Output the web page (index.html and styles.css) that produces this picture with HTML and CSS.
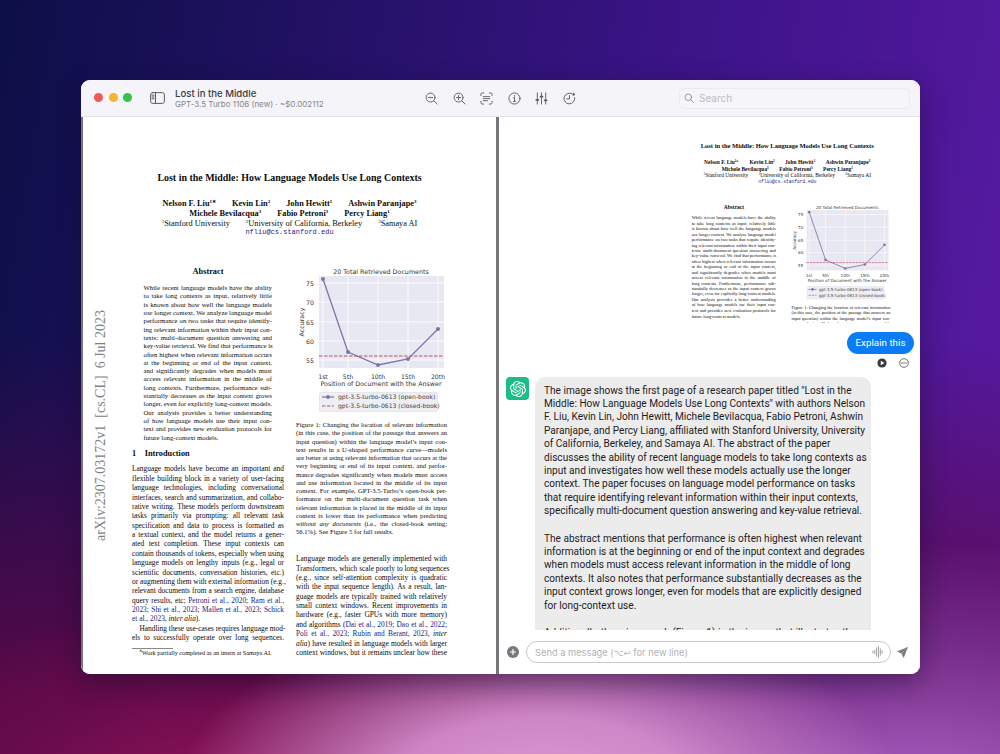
FILE: index.html
```html
<!DOCTYPE html>
<html lang="en">
<head>
<meta charset="utf-8">
<title>Lost in the Middle</title>
<link rel="stylesheet" href="styles.css">
</head>
<body>
<svg class="defs" width="0" height="0" aria-hidden="true">
  <defs>
    <g id="chart">
      <rect x="23" y="11" width="125" height="92" fill="#e8e8f2"/>
      <g stroke="#fff" stroke-width=".8">
        <path d="M23 18H148M23 37H148M23 57H148M23 76H148M23 95H148"/>
        <path d="M27 11V103M52 11V103M82 11V103M112 11V103M142 11V103"/>
      </g>
      <path d="M27 14L52 87L82 100L112 94L142 64" fill="none" stroke="#8073ab" stroke-width="1.3"/>
      <g fill="#8073ab">
        <circle cx="27" cy="14" r="2"/><circle cx="52" cy="87" r="2"/><circle cx="82" cy="100" r="2"/><circle cx="112" cy="94" r="2"/><circle cx="142" cy="64" r="2"/>
      </g>
      <path d="M23 91H148" stroke="#c2506a" stroke-width="1" stroke-dasharray="3.5 1.5"/>
      <g class="ct">
        <text class="ct-title" x="85" y="8.5" text-anchor="middle">20 Total Retrieved Documents</text>
        <text class="ct-tick" x="10" y="20.5">75</text>
        <text class="ct-tick" x="10" y="39.5">70</text>
        <text class="ct-tick" x="10" y="59.5">65</text>
        <text class="ct-tick" x="10" y="78.5">60</text>
        <text class="ct-tick" x="10" y="97.5">55</text>
        <text class="ct-tick" x="27" y="113.5" text-anchor="middle">1st</text>
        <text class="ct-tick" x="52" y="113.5" text-anchor="middle">5th</text>
        <text class="ct-tick" x="82" y="113.5" text-anchor="middle">10th</text>
        <text class="ct-tick" x="112" y="113.5" text-anchor="middle">15th</text>
        <text class="ct-tick" x="142" y="113.5" text-anchor="middle">20th</text>
        <text class="ct-title" x="85" y="120.5" text-anchor="middle">Position of Document with the Answer</text>
        <text class="ct-title" transform="translate(7.5 57) rotate(-90)" text-anchor="middle">Accuracy</text>
      </g>
      <rect x="23.5" y="127.5" width="118" height="19" rx="1.5" fill="#eeeef5" stroke="#dcdce6" stroke-width=".6"/>
      <path d="M26 132H38" stroke="#8073ab" stroke-width="1.2"/>
      <circle cx="32" cy="132" r="2" fill="#8073ab"/>
      <path d="M26 141H38" stroke="#c2506a" stroke-width="1" stroke-dasharray="3.5 1.5"/>
      <text class="ct-leg" x="42" y="134">gpt-3.5-turbo-0613 (open-book)</text>
      <text class="ct-leg" x="42" y="143">gpt-3.5-turbo-0613 (closed-book)</text>
    </g>
  </defs>
</svg>

<main class="window">
  <header class="titlebar">
    <div class="lights"><i class="light red"></i><i class="light yellow"></i><i class="light green"></i></div>
    <svg class="ico sidebar-ico" viewBox="0 0 15 12"><rect x=".6" y=".6" width="13.8" height="10.8" rx="2.2"/><path d="M5.5.6V11.4M2 3.2H4M2 5H4M2 6.8H4"/></svg>
    <div class="doc">
      <div class="doc-title">Lost in the Middle</div>
      <div class="doc-sub">GPT-3.5 Turbo 1106 (new) · ~$0.002112</div>
    </div>
    <div class="tools">
      <svg class="ico" viewBox="0 0 14 14"><circle cx="6" cy="6" r="4.8"/><path d="M9.5 9.5L13 13M3.8 6H8.2"/></svg>
      <svg class="ico" viewBox="0 0 14 14"><circle cx="6" cy="6" r="4.8"/><path d="M9.5 9.5L13 13M3.8 6H8.2M6 3.8V8.2"/></svg>
      <svg class="ico" viewBox="0 0 14 14"><path d="M1 4V2.500Q1 1 2.500 1H4M10 1H11.500Q13 1 13 2.500V4M13 10V11.500Q13 13 11.500 13H10M4 13H2.500Q1 13 1 11.500V10M3.500 5H10.500M3.500 7.200H10.500M3.500 9.400H8"/></svg>
      <svg class="ico" viewBox="0 0 14 14"><circle cx="7" cy="7" r="6"/><path d="M7 6.300V10.200M6 6.300H7M6 10.200H8M7 3.700V4.500"/></svg>
      <svg class="ico" viewBox="0 0 14 14"><path d="M2.500 1V13M7 1V13M11.500 1V13"/><path class="knob" d="M1.500 8.500H3.500M6 5H8M10.500 9H12.500"/></svg>
      <svg class="ico" viewBox="0 0 14 14"><path d="M9.500 1.800A5.800 5.800 0 1 0 12.600 6M7 3.800V7.500H3.800"/><circle class="badge" cx="11.500" cy="2.500" r="1.700"/></svg>
    </div>
    <div class="search">
      <svg class="ico search-ico" viewBox="0 0 14 14"><circle cx="6" cy="6" r="4.600"/><path d="M9.500 9.500L13 13"/></svg>
      <span>Search</span>
    </div>
  </header>

  <div class="panes">
    <section class="pdf-pane">
      <div class="stamp">arXiv:2307.03172v1 &nbsp;[cs.CL] &nbsp;6 Jul 2023</div>
      <article class="paper">
        <h1 class="p-title">Lost in the Middle: How Language Models Use Long Contexts</h1>
        <div class="p-authors">
          <div class="row"><b>Nelson F. Liu<sup>1∗</sup></b><b>Kevin Lin<sup>2</sup></b><b>John Hewitt<sup>1</sup></b><b>Ashwin Paranjape<sup>3</sup></b></div>
          <div class="row"><b>Michele Bevilacqua<sup>3</sup></b><b>Fabio Petroni<sup>3</sup></b><b>Percy Liang<sup>1</sup></b></div>
          <div class="row wide"><span><sup>1</sup>Stanford University</span><span><sup>2</sup>University of California, Berkeley</span><span><sup>3</sup>Samaya AI</span></div>
          <div class="mail">nfliu@cs.stanford.edu</div>
        </div>
        <div class="cols">
          <div class="col">
            <h2 class="abs-h">Abstract</h2>
            <div class="lines abs">
              <span>While recent language models have the ability</span>
              <span>to take long contexts as input, relatively little</span>
              <span>is known about how well the language models</span>
              <span><em>use</em> longer context. We analyze language model</span>
              <span>performance on two tasks that require identify-</span>
              <span>ing relevant information within their input con-</span>
              <span>texts: multi-document question answering and</span>
              <span>key-value retrieval. We find that performance is</span>
              <span>often highest when relevant information occurs</span>
              <span>at the beginning or end of the input context,</span>
              <span>and significantly degrades when models must</span>
              <span>access relevant information in the middle of</span>
              <span>long contexts. Furthermore, performance sub-</span>
              <span>stantially decreases as the input context grows</span>
              <span>longer, even for explicitly long-context models.</span>
              <span>Our analysis provides a better understanding</span>
              <span>of how language models use their input con-</span>
              <span>text and provides new evaluation protocols for</span>
              <span class="end">future long-context models.</span>
            </div>
            <h2 class="sec-h"><span>1</span><span>Introduction</span></h2>
            <div class="lines body">
              <span>Language models have become an important and</span>
              <span>flexible building block in a variety of user-facing</span>
              <span>language technologies, including conversational</span>
              <span>interfaces, search and summarization, and collabo-</span>
              <span>rative writing. These models perform downstream</span>
              <span>tasks primarily via prompting: all relevant task</span>
              <span>specification and data to process is formatted as</span>
              <span>a textual context, and the model returns a gener-</span>
              <span>ated text completion. These input contexts can</span>
              <span>contain thousands of tokens, especially when using</span>
              <span>language models on lengthy inputs (e.g., legal or</span>
              <span>scientific documents, conversation histories, etc.)</span>
              <span>or augmenting them with external information (e.g.,</span>
              <span>relevant documents from a search engine, database</span>
              <span>query results, etc; <a>Petroni et al., 2020</a>; <a>Ram et al.,</a></span>
              <span><a>2023</a>; <a>Shi et al., 2023</a>; <a>Mallen et al., 2023</a>; <a>Schick</a></span>
              <span class="end"><a>et al., 2023</a>, <em>inter alia</em>).</span>
              <span class="indent">Handling these use-cases requires language mod-</span>
              <span>els to successfully operate over long sequences.</span>
            </div>
            <div class="foot"><sup>∗</sup>Work partially completed as an intern at Samaya AI.</div>
          </div>
          <div class="col">
            <svg class="chart" viewBox="0 0 155 150"><use href="#chart"/></svg>
            <div class="lines cap">
              <span>Figure 1: Changing the location of relevant information</span>
              <span>(in this case, the position of the passage that answers an</span>
              <span>input question) within the language model’s input con-</span>
              <span>text results in a U-shaped performance curve—models</span>
              <span>are better at using relevant information that occurs at the</span>
              <span>very beginning or end of its input context, and perfor-</span>
              <span>mance degrades significantly when models must access</span>
              <span>and use information located in the middle of its input</span>
              <span>context. For example, GPT-3.5-Turbo’s open-book per-</span>
              <span>formance on the multi-document question task when</span>
              <span>relevant information is placed in the middle of its input</span>
              <span>context is lower than its performance when predicting</span>
              <span><em>without any documents</em> (i.e., the closed-book setting;</span>
              <span class="end">56.1%). See Figure <a>5</a> for full results.</span>
            </div>
            <div class="lines body body-2">
              <span>Language models are generally implemented with</span>
              <span>Transformers, which scale poorly to long sequences</span>
              <span>(e.g., since self-attention complexity is quadratic</span>
              <span>with the input sequence length). As a result, lan-</span>
              <span>guage models are typically trained with relatively</span>
              <span>small context windows. Recent improvements in</span>
              <span>hardware (e.g., faster GPUs with more memory)</span>
              <span>and algorithms (<a>Dai et al., 2019</a>; <a>Dao et al., 2022</a>;</span>
              <span><a>Poli et al., 2023</a>; <a>Rubin and Berant, 2023</a>, <em>inter</em></span>
              <span><em>alia</em>) have resulted in language models with larger</span>
              <span>context windows, but it remains unclear how these</span>
            </div>
          </div>
        </div>
      </article>
    </section>

    <section class="chat-pane">
      <div class="thumb">
        <div class="thumb-inner">
          <article class="paper">
            <h1 class="p-title">Lost in the Middle: How Language Models Use Long Contexts</h1>
            <div class="p-authors">
              <div class="row"><b>Nelson F. Liu<sup>1∗</sup></b><b>Kevin Lin<sup>2</sup></b><b>John Hewitt<sup>1</sup></b><b>Ashwin Paranjape<sup>3</sup></b></div>
              <div class="row"><b>Michele Bevilacqua<sup>3</sup></b><b>Fabio Petroni<sup>3</sup></b><b>Percy Liang<sup>1</sup></b></div>
              <div class="row wide"><span><sup>1</sup>Stanford University</span><span><sup>2</sup>University of California, Berkeley</span><span><sup>3</sup>Samaya AI</span></div>
              <div class="mail">nfliu@cs.stanford.edu</div>
            </div>
            <div class="cols">
              <div class="col">
                <h2 class="abs-h">Abstract</h2>
                <div class="lines abs">
                  <span>While recent language models have the ability</span>
                  <span>to take long contexts as input, relatively little</span>
                  <span>is known about how well the language models</span>
                  <span><em>use</em> longer context. We analyze language model</span>
                  <span>performance on two tasks that require identify-</span>
                  <span>ing relevant information within their input con-</span>
                  <span>texts: multi-document question answering and</span>
                  <span>key-value retrieval. We find that performance is</span>
                  <span>often highest when relevant information occurs</span>
                  <span>at the beginning or end of the input context,</span>
                  <span>and significantly degrades when models must</span>
                  <span>access relevant information in the middle of</span>
                  <span>long contexts. Furthermore, performance sub-</span>
                  <span>stantially decreases as the input context grows</span>
                  <span>longer, even for explicitly long-context models.</span>
                  <span>Our analysis provides a better understanding</span>
                  <span>of how language models use their input con-</span>
                  <span>text and provides new evaluation protocols for</span>
                  <span class="end">future long-context models.</span>
                </div>
              </div>
              <div class="col">
                <svg class="chart" viewBox="0 0 155 150"><use href="#chart"/></svg>
                <div class="lines cap">
                  <span>Figure 1: Changing the location of relevant information</span>
                  <span>(in this case, the position of the passage that answers an</span>
                  <span>input question) within the language model’s input con-</span>
                  <span>text results in a U-shaped performance curve—models</span>
                </div>
              </div>
            </div>
          </article>
        </div>
      </div>

      <div class="explain-row"><div class="explain">Explain this</div></div>
      <div class="actions">
        <svg class="act" viewBox="0 0 12 12"><circle cx="6" cy="6" r="5.500" fill="#3a3a3c"/><path d="M4.500 3.300V8.700L9 6Z" fill="#fff"/></svg>
        <svg class="act" viewBox="0 0 12 12"><circle cx="6" cy="6" r="5.200" fill="none" stroke="#444" stroke-width=".9"/><circle cx="3.500" cy="6" r=".8" fill="#444"/><circle cx="6" cy="6" r=".8" fill="#444"/><circle cx="8.500" cy="6" r=".8" fill="#444"/></svg>
      </div>

      <div class="message">
        <div class="avatar">
          <svg viewBox="0 0 24 24"><path fill="#fff" d="M22.2819 9.8211a5.9847 5.9847 0 0 0-.5157-4.9108 6.0462 6.0462 0 0 0-6.5098-2.9A6.0651 6.0651 0 0 0 4.9807 4.1818a5.9847 5.9847 0 0 0-3.9977 2.9 6.0462 6.0462 0 0 0 .7427 7.0966 5.98 5.98 0 0 0 .511 4.9107 6.051 6.051 0 0 0 6.5146 2.9001A5.9847 5.9847 0 0 0 13.2599 24a6.0557 6.0557 0 0 0 5.7718-4.2058 5.9894 5.9894 0 0 0 3.9977-2.9001 6.0557 6.0557 0 0 0-.7475-7.0729zm-9.022 12.6081a4.4755 4.4755 0 0 1-2.8764-1.0408l.1419-.0804 4.7783-2.7582a.7948.7948 0 0 0 .3927-.6813v-6.7369l2.02 1.1686a.071.071 0 0 1 .038.052v5.5826a4.504 4.504 0 0 1-4.4945 4.4944zm-9.6607-4.1254a4.4708 4.4708 0 0 1-.5346-3.0137l.142.0852 4.783 2.7582a.7712.7712 0 0 0 .7806 0l5.8428-3.3685v2.3324a.0804.0804 0 0 1-.0332.0615L9.74 19.9502a4.4992 4.4992 0 0 1-6.1408-1.6464zM2.3408 7.8956a4.485 4.485 0 0 1 2.3655-1.9728V11.6a.7664.7664 0 0 0 .3879.6765l5.8144 3.3543-2.0201 1.1685a.0757.0757 0 0 1-.071 0l-4.8303-2.7865A4.504 4.504 0 0 1 2.3408 7.872zm16.5963 3.8558L13.1038 8.364 15.1192 7.2a.0757.0757 0 0 1 .071 0l4.8303 2.7913a4.4944 4.4944 0 0 1-.6765 8.1042v-5.6772a.79.79 0 0 0-.407-.667zm2.0107-3.0231l-.142-.0852-4.7735-2.7818a.7759.7759 0 0 0-.7854 0L9.409 9.2297V6.8974a.0662.0662 0 0 1 .0284-.0615l4.8303-2.7866a4.4992 4.4992 0 0 1 6.6802 4.66zM8.3065 12.863l-2.02-1.1638a.0804.0804 0 0 1-.038-.0567V6.0742a4.4992 4.4992 0 0 1 7.3757-3.4537l-.142.0805L8.704 5.459a.7948.7948 0 0 0-.3927.6813zm1.0976-2.3654l2.602-1.4998 2.6069 1.4998v2.9994l-2.5974 1.4997-2.6067-1.4997Z"/></svg>
        </div>
        <div class="bubble">
          <p>
            <span>The image shows the first page of a research paper titled "Lost in the</span>
            <span>Middle: How Language Models Use Long Contexts" with authors Nelson</span>
            <span>F. Liu, Kevin Lin, John Hewitt, Michele Bevilacqua, Fabio Petroni, Ashwin</span>
            <span>Paranjape, and Percy Liang, affiliated with Stanford University, University</span>
            <span>of California, Berkeley, and Samaya AI. The abstract of the paper</span>
            <span>discusses the ability of recent language models to take long contexts as</span>
            <span>input and investigates how well these models actually use the longer</span>
            <span>context. The paper focuses on language model performance on tasks</span>
            <span>that require identifying relevant information within their input contexts,</span>
            <span>specifically multi-document question answering and key-value retrieval.</span>
          </p>
          <p>
            <span>The abstract mentions that performance is often highest when relevant</span>
            <span>information is at the beginning or end of the input context and degrades</span>
            <span>when models must access relevant information in the middle of long</span>
            <span>contexts. It also notes that performance substantially decreases as the</span>
            <span>input context grows longer, even for models that are explicitly designed</span>
            <span>for long-context use.</span>
          </p>
          <p>
            <span>Additionally, there is a graph (Figure 1) in the image that illustrates the</span>
          </p>
        </div>
      </div>

      <footer class="composer">
        <svg class="plus" viewBox="0 0 12 12"><circle cx="6" cy="6" r="6" fill="#77777c"/><path d="M6 3V9M3 6H9" stroke="#fff" stroke-width="1.200"/></svg>
        <div class="input">
          <span class="ph">Send a message (<span class="keys">⌥↩</span> for new line)</span>
          <svg class="wave" viewBox="0 0 13 13"><path d="M1 5.500V7.500M3 4.500V8.500M5 2V11M7 .8V12.200M9 3V10M11 5V8"/></svg>
        </div>
        <svg class="send" viewBox="0 0 12 12"><path d="M11.500.5L.5 4.800L4.600 6.800L11.500.5L5.200 7.400L7.200 11.500Z" fill="#77777c" stroke="#77777c" stroke-width=".5" stroke-linejoin="round"/></svg>
      </footer>
    </section>
  </div>
</main>
</body>
</html>
```

FILE: styles.css
```css
* { box-sizing: border-box; }

html, body { height: 100%; }

body {
  margin: 0;
  width: 1000px;
  height: 754px;
  overflow: hidden;
  padding: 80px 80px 80px 81px;
  font-family: "Inter", "Liberation Sans", sans-serif;
  background:
    radial-gradient(ellipse 360px 170px at 540px 785px, #dc98d2 0%, rgba(216,146,208,.9) 40%, rgba(190,110,190,0) 100%),
    radial-gradient(ellipse 400px 200px at 240px 800px, rgba(150,20,90,.95) 0%, rgba(120,15,80,.5) 60%, rgba(100,10,80,0) 100%),
    radial-gradient(ellipse 500px 260px at 920px 800px, rgba(175,105,205,.95) 0%, rgba(140,70,180,.55) 60%, rgba(120,50,170,0) 100%),
    linear-gradient(180deg, rgba(90,8,70,0) 45%, rgba(90,8,70,.95) 92%),
    linear-gradient(100deg, #0d0f47 0%, #1f1160 25%, #3c1488 62%, #5a1aa5 100%);
}

.defs { position: absolute; }

.window {
  height: 594px;
  width: 839px;
  border-radius: 9px;
  overflow: hidden;
  background: #fff;
  box-shadow: 0 8px 26px rgba(20, 10, 40, .45);
  display: flex;
  flex-direction: column;
}

/* title bar */
.titlebar {
  height: 37px;
  flex: none;
  display: flex;
  align-items: center;
  background: #f5f4f8;
  border-bottom: 1px solid #e4e3e8;
  padding: 0 10px 0 13px;
}

.lights { display: flex; gap: 5.5px; margin-top: -1px; }

.light {
  display: block;
  width: 9px;
  height: 9px;
  border-radius: 50%;
}

.red { background: #f05a54; }
.yellow { background: #f6b430; }
.green { background: #33c24a; }

.ico {
  width: 13px;
  height: 13px;
  flex: none;
  fill: none;
  stroke: #5c5c62;
  stroke-width: 1;
  stroke-linecap: round;
}

.sidebar-ico { width: 15px; height: 12px; margin-left: 18px; }

.doc { width: 240px; margin-left: 10px; padding-top: 2px; }

.doc-title {
  font-size: 9.600px;
  line-height: 11px;
  font-weight: 500;
  color: #3a3a40;
}

.doc-sub {
  font-size: 8px;
  line-height: 11px;
  color: #85858b;
}

.tools {
  display: flex;
  gap: 14.500px;
  margin-left: 10px;
}

.knob { stroke-width: 2; }
.badge { fill: #5c5c62; stroke: #f5f4f8; stroke-width: .6; }

.search {
  margin-left: auto;
  width: 231px;
  height: 21px;
  display: flex;
  align-items: center;
  gap: 5px;
  padding-left: 4px;
  border: 1px solid #ecebf0;
  border-radius: 5px;
  background: #f6f5f9;
  font-size: 10px;
  color: #bdbdc2;
}

.search-ico { width: 10px; height: 10px; stroke: #77777d; }

/* panes */
.panes { flex: 1; display: flex; min-height: 0; }

.pdf-pane {
  position: relative;
  flex: none;
  width: 418px;
  background: #fff;
  border-left: 2px solid #77777b;
  border-right: 3px solid #77777b;
  overflow: hidden;
}

.stamp {
  position: absolute;
  left: 10px;
  top: 192px;
  height: 232px;
  writing-mode: vertical-rl;
  transform: rotate(180deg);
  font: 14px/16px "Liberation Serif", serif;
  color: #808084;
  white-space: nowrap;
  text-align: left;
}

/* paper */
.paper {
  width: 413px;
  padding-top: 54px;
  font-family: "Liberation Serif", serif;
  color: #0c0c0c;
}

.p-title {
  margin: 0;
  font-size: 9.950px;
  line-height: 14px;
  text-align: center;
}

.p-authors {
  margin-top: 14px;
  font-size: 8.300px;
  line-height: 9.800px;
  text-align: center;
}

.row { display: flex; justify-content: center; gap: 16px; height: 9.800px; white-space: nowrap; }
.row.wide { gap: 16px; }

sup { font-size: 60%; line-height: 0; vertical-align: 3px; }

.mail {
  font: 7px/9.800px "Liberation Mono", monospace;
  color: #1e1e88;
}

.cols {
  display: grid;
  grid-template-columns: 152px 151px;
  gap: 12px;
  margin: 27px 0 0 49px;
}

.col { min-width: 0; }

.lines span {
  display: block;
  white-space: nowrap;
  text-align: justify;
  text-align-last: justify;
}

.lines .end { text-align-last: left; }
.lines .indent { padding-left: 7.500px; }

.lines a { color: #1c1c8a; }

.abs-h {
  margin: 2px 0 0;
  font-size: 8.300px;
  line-height: 10px;
  text-align: center;
}

.abs {
  margin: 7px 12px 0 11.500px;
  font-size: 6.750px;
  line-height: 8.300px;
}

.sec-h {
  display: flex;
  gap: 8.500px;
  margin: 7px 0 0;
  font-size: 8.300px;
  line-height: 10px;
}

.body {
  margin-top: 5.600px;
  font-size: 7.400px;
  line-height: 9.370px;
}

.foot {
  margin-top: 5px;
  padding: 1px 0 0 7px;
  font-size: 6.200px;
  line-height: 8px;
  white-space: nowrap;
  position: relative;
}

.foot::before {
  content: "";
  position: absolute;
  left: 0;
  top: 0;
  width: 41px;
  border-top: 1px solid #888;
}

.chart { display: block; width: 155px; height: 150px; }

.ct-title, .ct-tick, .ct-leg { font-family: "DejaVu Sans", sans-serif; fill: #333; }
.ct-title { font-size: 6.350px; }
.ct-tick { font-size: 6.200px; }
.ct-leg { font-size: 6.100px; fill: #444; }

.cap {
  margin-top: 6px;
  font-size: 6.650px;
  line-height: 8.250px;
}

.body-2 { margin-top: 17.500px; }

/* chat */
.chat-pane {
  flex: 1;
  min-width: 0;
  display: flex;
  flex-direction: column;
  background: #fff;
}

.thumb { height: 206px; flex: none; overflow: hidden; }

.thumb-inner {
  width: 413px;
  margin: -11px 0 0 153px;
  transform: scale(.655);
  transform-origin: 0 0;
}

.explain-row { display: flex; justify-content: flex-end; padding: 9px 6px 0 0; }

.explain {
  width: 67px;
  height: 22px;
  border-radius: 11px;
  background: #0b7cf6;
  color: #fff;
  font-family: "Roboto", "Liberation Sans", sans-serif;
  font-size: 9.800px;
  line-height: 22px;
  text-align: center;
  white-space: nowrap;
}

.actions {
  display: flex;
  justify-content: flex-end;
  gap: 12px;
  padding: 4px 11px 0 0;
  height: 17px;
}

.act { width: 10px; height: 10px; }

.message {
  flex: 1;
  min-height: 0;
  display: flex;
  gap: 6px;
  padding-left: 7px;
  padding-top: 6px;
  overflow: hidden;
}

.avatar {
  width: 23px;
  height: 23px;
  flex: none;
  border-radius: 4px;
  background: #1bbd86;
  padding: 3.500px;
}

.avatar svg { display: block; width: 16px; height: 16px; }

.bubble {
  flex: none;
  width: 336px;
  height: 260px;
  padding: 6.500px 0 0 9px;
  border-radius: 10px 10px 0 0;
  background: #ececec;
  font-family: "Roboto", "Liberation Sans", sans-serif;
  font-size: 10.100px;
  line-height: 13.400px;
  color: #1d1d1f;
  overflow: hidden;
}

.bubble p { margin: 0 0 14px; }
.bubble span { display: block; white-space: nowrap; }

.composer {
  height: 44px;
  flex: none;
  display: flex;
  align-items: center;
  padding: 0 0 0 8px;
}

.plus { width: 12px; height: 12px; flex: none; }

.input {
  width: 365px;
  height: 22px;
  margin-left: 7px;
  border: 1px solid #c9c9cc;
  border-radius: 11px;
  display: flex;
  align-items: center;
  justify-content: space-between;
  padding: 0 6px 0 8px;
  background: #fff;
  font-size: 9.300px;
  color: #b2b2b6;
}

.keys { font-family: "DejaVu Sans", sans-serif; font-size: 8.500px; }

.wave { width: 12px; height: 12px; fill: none; stroke: #9a9a9e; stroke-width: 1; stroke-linecap: round; }

.send { width: 11px; height: 11px; margin-left: 6px; flex: none; }
```
